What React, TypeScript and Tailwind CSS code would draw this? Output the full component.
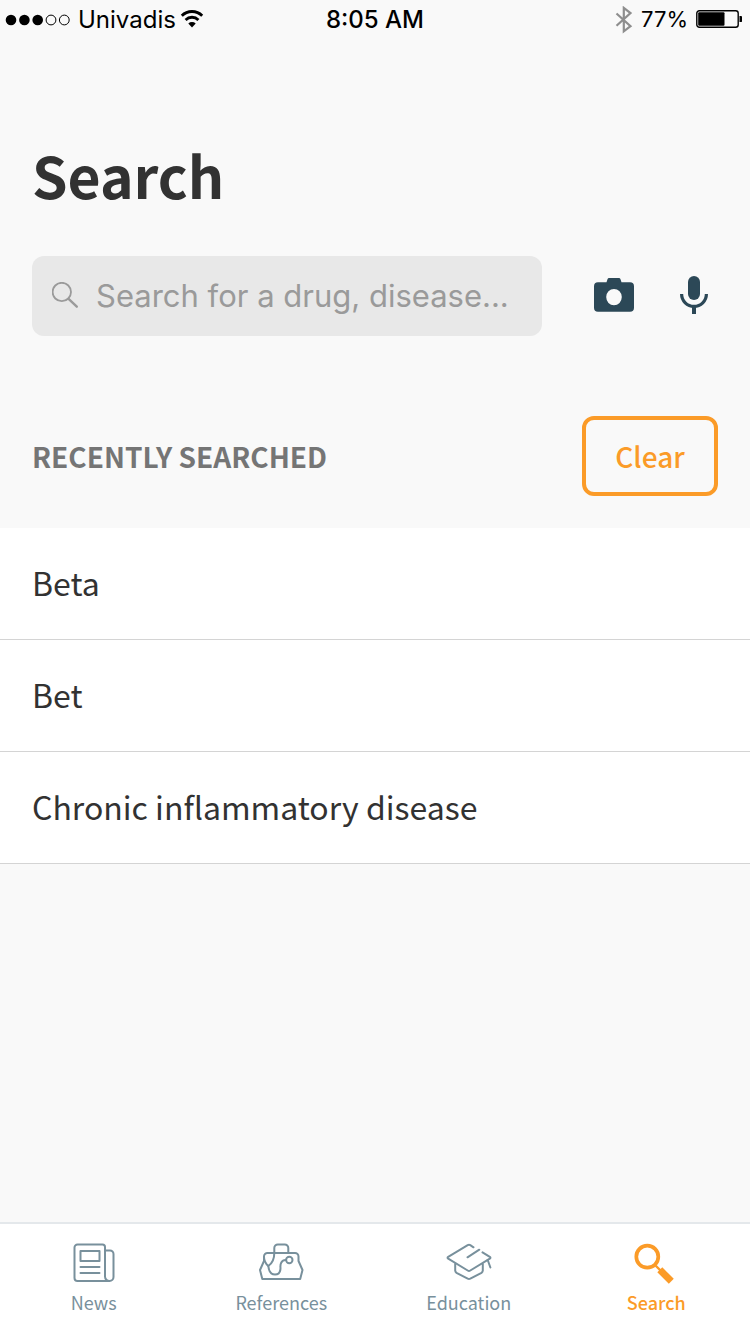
import type { ReactNode } from "react"
import clsx from "clsx"

const recentSearches = ["Beta", "Bet", "Chronic inflammatory disease"]

interface TabProps {
    label: string
    active?: boolean
    children: ReactNode
}

function StatusBar() {
    return (
        <div className="grid h-10 grid-cols-3 items-center px-1 font-['Inter','Liberation_Sans',sans-serif] text-2xl text-black">
            <div className="flex items-center gap-2">
                <svg width="66" height="12" viewBox="0 0 66 12" aria-hidden="true">
                    <circle cx="7" cy="6" r="5.3" />
                    <circle cx="20.4" cy="6" r="5.3" />
                    <circle cx="33.7" cy="6" r="5.3" />
                    <g fill="none" stroke="currentColor">
                        <circle cx="47" cy="6" r="4.9" />
                        <circle cx="60.3" cy="6" r="4.9" />
                    </g>
                </svg>
                <div className="flex items-center gap-1">
                    <span>Univadis</span>
                    <svg width="24" height="20" viewBox="0 0 24 20" aria-hidden="true">
                        <g fill="none" stroke="currentColor" strokeWidth="2.8">
                            <path d="M1.8 5.7a14.5 14.5 0 0 1 20.4 0" />
                            <path d="M5.6 9.9a9 9 0 0 1 12.8 0" />
                        </g>
                        <path d="M12 17.5 8.3 13.5a5.4 5.4 0 0 1 7.4 0Z" />
                    </svg>
                </div>
            </div>
            <span className="text-center font-medium">8:05 AM</span>
            <div className="flex items-center justify-end gap-2 pr-1">
                <svg
                    className="text-[#8e8e8e]"
                    width="18"
                    height="28"
                    viewBox="0 0 18 28"
                    fill="none"
                    stroke="currentColor"
                    strokeWidth="2.2"
                    aria-hidden="true"
                >
                    <path d="m1.5 7.5 14 12.6-6.7 5.2V1.9l6.7 5.2L1.5 19.7" />
                </svg>
                <span className="text-[22px]">77%</span>
                <svg width="46" height="20" viewBox="0 0 46 20" aria-hidden="true">
                    <rect
                        x=".8"
                        y=".8"
                        width="41.4"
                        height="16.4"
                        rx="2.5"
                        fill="none"
                        stroke="currentColor"
                        strokeWidth="1.4"
                    />
                    <rect x="2.2" y="2.2" width="26.3" height="13.6" rx="1" />
                    <path d="M43.5 6H45q1.5 0 1.5 3T45 12h-1.5Z" />
                </svg>
            </div>
        </div>
    )
}

function SearchBar() {
    return (
        <form className="flex items-center">
            <label className="flex h-20 min-w-0 flex-1 items-center gap-4 rounded-xl bg-[#e8e8e8] pl-5 text-[#9a9a9a]">
                <svg
                    className="shrink-0"
                    width="28"
                    height="28"
                    viewBox="0 0 28 28"
                    fill="none"
                    stroke="currentColor"
                    aria-hidden="true"
                >
                    <circle cx="9.8" cy="10" r="9.2" strokeWidth="1.8" />
                    <path d="m16.3 16.7 8.5 8" strokeWidth="2.4" strokeLinecap="round" />
                </svg>
                <input
                    type="text"
                    aria-label="Search"
                    placeholder="Search for a drug, disease..."
                    className="h-full w-full min-w-0 bg-transparent pb-0.5 font-['Inter','Liberation_Sans',sans-serif] text-[31px] outline-none placeholder:text-[#9a9a9a]"
                />
            </label>
            <button type="button" aria-label="Search by photo" className="ml-13 text-[#2c4857]">
                <svg width="40" height="40" viewBox="0 0 40 40" fill="currentColor">
                    <path
                        fillRule="evenodd"
                        d="M15 2h10q1 0 1.4 1l1.1 3.300H36a4 4 0 0 1 4 4V31.700a4 4 0 0 1-4 4H4a4 4 0 0 1-4-4V10.300a4 4 0 0 1 4-4h8.500L13.600 3Q14 2 15 2Zm5 10.900a7.800 8.200 0 1 0 0 16.400 7.800 8.200 0 0 0 0-16.400Z"
                    />
                </svg>
            </button>
            <button type="button" aria-label="Search by voice" className="mr-1 ml-10 text-[#2c4857]">
                <svg width="40" height="40" viewBox="0 0 40 40" fill="none">
                    <rect x="14" width="12" height="24" rx="6" fill="currentColor" />
                    <path
                        d="M7.600 18a12.400 12.400 0 0 0 24.800 0"
                        stroke="currentColor"
                        strokeWidth="3.2"
                    />
                    <path d="M18 30h4v8h-4Z" fill="currentColor" />
                </svg>
            </button>
        </form>
    )
}

function Tab({ label, active, children }: TabProps) {
    return (
        <a
            href="#"
            aria-current={active ? "page" : undefined}
            className={clsx(
                "flex flex-1 flex-col items-center gap-0.5 pt-[18px] text-lg leading-7",
                active ? "font-medium text-[#fb9b28]" : "text-[#78909c]",
            )}
        >
            <svg
                width="48"
                height="44"
                viewBox="0 0 48 44"
                fill="none"
                stroke="currentColor"
                strokeWidth="2"
                strokeLinecap="round"
                strokeLinejoin="round"
                aria-hidden="true"
            >
                {children}
            </svg>
            {label}
        </a>
    )
}

export default function App() {
    return (
        <div className="flex min-h-screen flex-col bg-[#f9f9f9] font-['Noto_Sans_CJK_SC',sans-serif] text-[#323232]">
            <StatusBar />
            <main className="flex-1">
                <header className="px-8 pt-24">
                    <h1 className="text-[57px] leading-19 font-bold">Search</h1>
                    <div className="pt-11">
                        <SearchBar />
                    </div>
                </header>
                <section className="pt-20">
                    <div className="flex items-center justify-between px-8 pb-8">
                        <h2 className="text-[28px] font-bold text-[#757575]">
                            RECENTLY SEARCHED
                        </h2>
                        <button
                            type="button"
                            className="h-20 w-34 rounded-xl border-4 border-[#fb9b28] text-[28px] font-medium text-[#fb9b28]"
                        >
                            Clear
                        </button>
                    </div>
                    <ul className="bg-white">
                        {recentSearches.map((term) => (
                            <li key={term} className="border-b border-[#d4d4d4]">
                                <a
                                    href="#"
                                    className="flex h-[111px] items-center px-8 pb-1 text-[32px]"
                                >
                                    {term}
                                </a>
                            </li>
                        ))}
                    </ul>
                </section>
            </main>
            <nav className="flex h-28 border-t-2 border-[#e4e8eb] bg-white">
                <Tab label="News">
                    <path d="M39.5 39h-32a3 3 0 0 1-3-3V5.500a3 3 0 0 1 3-3h25A2.500 2.500 0 0 1 35 5v29.500a4.500 4.500 0 0 0 4.500 4.500 4 4 0 0 0 4-4V12A3.500 3.500 0 0 0 40 8.500h-5" />
                    <path d="M10.500 9h19v10h-19ZM10.500 25h19M10.500 31h19" />
                </Tab>
                <Tab label="References">
                    <path d="M5.300 37 3 28l4-9v-4.500a3.500 3.500 0 0 1 3.500-3.500h27.500a3.500 3.500 0 0 1 3.500 3.500V19l4 9-2.300 9Z" />
                    <path d="M31.300 11V6a3.500 3.500 0 0 0-3.500-3.500h-7A3.500 3.500 0 0 0 17.300 6v5c0 5-1.500 10-6 13C8.500 21.500 7 19 7 15" />
                    <path d="M11.300 24c.5 5 2.500 8.500 6.700 8.500 3.500 0 5.500-2.500 5.500-6.500-.5-4 1-8 5-8" />
                    <circle cx="32.300" cy="18" r="3.200" />
                </Tab>
                <Tab label="Education">
                    <path d="M28.500 5.300 25.300 3.200q-1.300-.8-2.600 0L3.200 14.800q-1.300.9 0 1.800L22.700 28.500q1.300.8 2.600 0L44.800 16.600q1.300-.9 0-1.800L37.500 10.400" />
                    <path d="M22.500 15.300 34.300 7.700M42.700 18l2.700 7.500M10.200 22v6.500q0 1.500 1.300 2.300l11.200 5.800q1.300.7 2.600 0l11.200-5.800q1.300-.8 1.300-2.300V22" />
                </Tab>
                <Tab label="Search" active>
                    <circle cx="15.300" cy="14.700" r="11" strokeWidth="3.700" />
                    <path d="m23 23 5 5" strokeWidth="2.400" />
                    <path d="m27.800 27.800 11.500 11.500" strokeWidth="7" strokeLinecap="butt" />
                </Tab>
            </nav>
        </div>
    )
}
